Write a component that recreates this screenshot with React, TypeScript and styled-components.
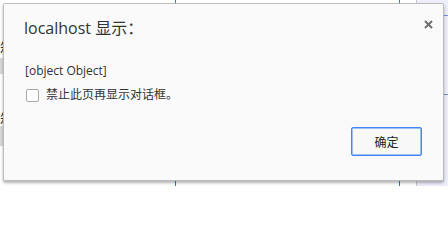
import React from "react";
import styled, { createGlobalStyle } from "styled-components";

const GlobalStyle = createGlobalStyle`
  html, body {
    margin: 0;
    padding: 0;
    background: #ffffff;
  }
  body {
    font-family: "Open Sans", "Noto Sans CJK SC", sans-serif;
  }
`;

const Screen = styled.div`
  position: relative;
  width: 448px;
  height: 234px;
  overflow: hidden;
  background: #ffffff;
`;

/* page behind the dialog */
const Page = styled.div`
  display: flex;
  height: 186px;
`;

const PageColumn = styled.div<{ $width: number; $border?: string; $bg?: string }>`
  width: ${(p) => p.$width}px;
  flex: none;
  border-right: 1px solid ${(p) => p.$border || "transparent"};
  background: ${(p) => p.$bg || "transparent"};
  display: flex;
  flex-direction: column;
`;

const LeftCell = styled.div<{ $height: number; $bg?: string }>`
  height: ${(p) => p.$height}px;
  background: ${(p) => p.$bg || "transparent"};
  font-size: 14px;
  line-height: ${(p) => p.$height}px;
  color: #333;
`;

const LavenderRow = styled.div<{ $height: number }>`
  height: ${(p) => p.$height}px;
  border-bottom: 1px solid #6f8fe0;
`;

/* dialog */
const Dialog = styled.div`
  position: absolute;
  left: 3px;
  top: 3px;
  width: 441px;
  height: 178px;
  box-sizing: border-box;
  background: #fafafa;
  border: 1px solid #bcbcbc;
  border-radius: 2px;
  box-shadow: 0 2px 3px rgba(0, 0, 0, 0.3);
  display: flex;
  flex-direction: column;
  padding: 14px 20px 0 20px;
  color: #333333;
`;

const TitleRow = styled.div`
  display: flex;
  justify-content: space-between;
  align-items: flex-start;
`;

const Title = styled.div`
  font-size: 16px;
  line-height: 20px;
  color: #333333;
`;

const CloseButton = styled.button`
  border: none;
  background: none;
  padding: 0;
  margin: 1px -10px 0 0;
  width: 10px;
  height: 10px;
  display: flex;
  align-items: center;
  justify-content: center;
  cursor: pointer;
`;

const Message = styled.div`
  margin-top: 25px;
  font-size: 12px;
  line-height: 16px;
  padding-left: 1px;
`;

const CheckRow = styled.label`
  display: flex;
  align-items: center;
  gap: 7px;
  margin-top: 8px;
  padding-left: 2px;
  font-size: 12px;
  line-height: 16px;
`;

const CheckBox = styled.span`
  width: 13px;
  height: 13px;
  box-sizing: border-box;
  border: 1px solid #a9a9a9;
  border-radius: 2px;
  background: #ffffff;
`;

const Footer = styled.div`
  display: flex;
  justify-content: flex-end;
  margin-top: 24px;
  margin-right: 1px;
`;

const OkButton = styled.button`
  appearance: none;
  width: 71px;
  height: 29px;
  box-sizing: border-box;
  border: 1px solid #4285f4;
  border-radius: 2px;
  box-shadow: inset 0 0 0 0.5px #4285f4;
  background: #f8f8f8;
  font-family: "Noto Sans CJK SC", sans-serif;
  font-size: 12px;
  color: #222222;
  padding: 0;
`;

export default function App() {
  return (
    <Screen>
      <GlobalStyle />
      <Page>
        <PageColumn $width={175} $border="#3a76d0">
          <LeftCell $height={38} />
          <LeftCell $height={20}>箱</LeftCell>
          <LeftCell $height={16} $bg="#d9d9d9" />
          <LeftCell $height={38} />
          <LeftCell $height={14}>箱</LeftCell>
          <LeftCell $height={20} $bg="#d9d9d9" />
        </PageColumn>
        <PageColumn $width={223} $border="#3a76d0" />
        <PageColumn $width={16} $border="#c8c8c8" />
        <PageColumn $width={31} $bg="#eeeefb">
          <LavenderRow $height={15} />
          <LavenderRow $height={78} />
        </PageColumn>
      </Page>
      <Dialog>
        <TitleRow>
          <Title>localhost 显示：</Title>
          <CloseButton aria-label="close">
            <svg width="9" height="9" viewBox="0 0 9 9">
              <path d="M1 1 L8 8 M8 1 L1 8" stroke="#6e6e6e" strokeWidth="2" />
            </svg>
          </CloseButton>
        </TitleRow>
        <Message>[object Object]</Message>
        <CheckRow>
          <CheckBox />
          禁止此页再显示对话框。
        </CheckRow>
        <Footer>
          <OkButton>确定</OkButton>
        </Footer>
      </Dialog>
    </Screen>
  );
}
